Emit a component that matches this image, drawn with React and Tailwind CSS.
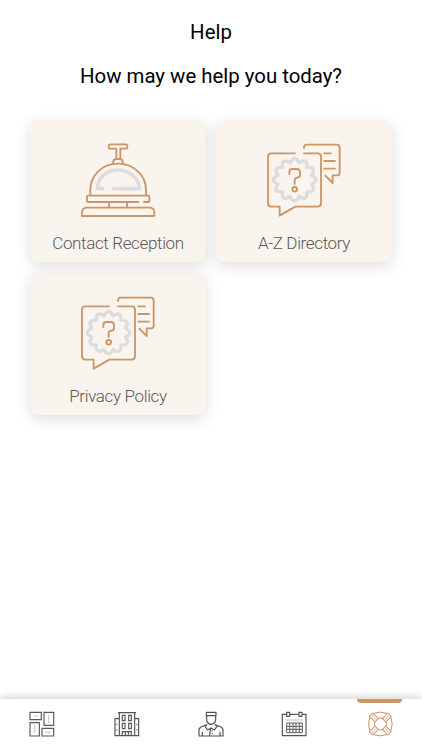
import React from "react";

const BellIcon = () => (
  <svg className="w-[100px] h-[90px]" viewBox="-5 1 300 270" fill="none" stroke="#cd9566" strokeWidth="5.5" strokeLinecap="round" strokeLinejoin="round">
    <path stroke="#dcdcdd" strokeWidth="11" d="M98 162H84v-6c2-28 26-50 60-50s60 22 65 50v6h-78" />
    <path d="M121 29h48q4 0 4 4v5q0 4-4 4h-17v31h-12V42h-19q-4 0-4-4v-5q0-4 4-4z" />
    <path d="M130 86c0-8 5-13 12-13h6c7 0 12 5 12 13" />
    <path d="M62 181v-15c0-44 36-79 83-79s84 35 84 79v15" />
    <path d="M206 202H55q-3 0-3-3v-13q0-3 3-3h181q3 0 3 3v13q0 3-3 3h-13" />
    <path d="M118 203v15M172 203v15" />
    <path d="M49 219h193q12 2 12 14v11H37v-11q0-12 12-14z" />
  </svg>
);

const QuestionIcon = () => (
  <svg className="w-[100px] h-[90px]" viewBox="-2 1 300 270" fill="none" stroke="#cd9566" strokeWidth="5.5" strokeLinecap="round" strokeLinejoin="round">
    <path
      stroke="#dcdcdd"
      strokeWidth="10"
      d="M106.500 84.800Q120 58 133.500 84.800Q158.500 68.300 156.800 98.200Q186.700 96.500 170.200 121.500Q197 135 170.200 148.500Q186.700 173.500 156.800 171.800Q158.500 201.700 133.500 185.200Q120 212 106.500 185.200Q81.500 201.700 83.200 171.800Q53.300 173.500 69.800 148.500Q43 135 69.800 121.500Q53.300 96.500 83.200 98.200Q81.500 68.300 106.500 84.800z"
    />
    <path d="M121 56H50q-10 0-10 10v140q0 10 10 10h25v27l47-27h67q10 0 10-10V66q0-10-10-10h-41" />
    <path d="M148 40v-1q0-9 9-9h89q9 0 9 9v75q0 8-8 8h-13v23l-22-22" />
    <path d="M209 56h20M209 79h32M209 102h32" />
    <path d="M104 118v-6q0-9 9-9h13q10 0 10 10v8q0 8-8 8-8 0-8 8v11" />
    <circle cx="120" cy="164" r="7" />
  </svg>
);

const RoomsIcon = () => (
  <svg className="w-7 h-7" viewBox="25 60 84 84" fill="none" stroke="#5a5a5a" strokeWidth="3.5">
    <path d="M31 67h34v22H31zM73 67h29v39H73zM31 98h28v40H31zM67 115h35v23H67z" />
    <path stroke="#c9c9c9" d="M40 78h16M87 76v23M45 106v22M77 127h16" />
  </svg>
);

const HotelIcon = () => (
  <svg className="w-7 h-7" viewBox="38 60 84 84" fill="none" stroke="#555" strokeWidth="3.5">
    <path d="M53 68h54M57 68v69M103 68v69M42 137h75M57 86H44v51M103 86h12v51" />
    <path d="M66 76h8v16h-8zM85 76h8v16h-8zM66 100h8v16h-8zM85 100h8v16h-8z" />
    <path d="M66 137v-12h27v12M75 125v12M84 125v12" />
    <path strokeWidth="2" d="M44 103h8M44 120h8M107 103h8M107 120h8" />
  </svg>
);

const ConciergeIcon = () => (
  <svg className="w-7 h-7" viewBox="36 60 84 84" fill="none" stroke="#505050" strokeWidth="3.5" strokeLinejoin="round">
    <path d="M64 67h29v10H64zM65 77v12c0 8 7 14 13 14s14-6 14-14V77" />
    <path d="M65 104L46 112l-4 6v20h72v-20l-4-6-19-8" />
    <path d="M67 103l-7 6 8 11 10-6 10 6 8-11-7-6M78 114c-4 8-4 14-4 24M52 125v13M105 125v13" />
    <path strokeWidth="2.5" d="M80 123h4M80 131h4" />
  </svg>
);

const CalendarIcon = () => (
  <svg className="w-7 h-7" viewBox="34 60 84 84" fill="none" stroke="#555" strokeWidth="3.5">
    <path d="M51 73H38v64h71V73H97M61 73h26M51 67h9v12h-9zM88 67h9v12h-9z" />
    <path stroke="#c9c9c9" d="M48 90h52" />
    <path strokeWidth="2.8" d="M51 99h47v29H51zM51 109h47M51 118h47M60 99v29M70 99v29M79 99v29M89 99v29" />
  </svg>
);

const LifebuoyIcon = () => (
  <svg className="w-7 h-7" viewBox="47 60 84 84" fill="none" stroke="#cd9566" strokeWidth="3" strokeLinejoin="round">
    <path d="M70 70q20-7 40 0l12 12q7 20 0 40l-12 12q-20 7-40 0l-12-12q-7-20 0-40z" />
    <circle cx="90" cy="102" r="18" />
    {[45, 135, 225, 315].map((deg) => (
      <g key={deg} transform={`rotate(${deg} 90 102)`}>
        <path fill="#fff" d="M106 95h23v14h-23z" />
        <path stroke="#dedad7" strokeWidth="5" d="M109 102h18" />
      </g>
    ))}
  </svg>
);

const cards = [
  { title: "Contact Reception", icon: <BellIcon /> },
  { title: "A-Z Directory", icon: <QuestionIcon /> },
  { title: "Privacy Policy", icon: <QuestionIcon /> },
];

const tabs = [
  { name: "Rooms", icon: <RoomsIcon /> },
  { name: "Hotel", icon: <HotelIcon /> },
  { name: "Concierge", icon: <ConciergeIcon /> },
  { name: "Calendar", icon: <CalendarIcon /> },
  { name: "Help", icon: <LifebuoyIcon />, active: true },
];

const App = () => {
  return (
    <div className="flex flex-col h-screen overflow-hidden bg-white font-['Roboto',sans-serif] text-black">
      <header className="pt-[18px] text-center text-[20.4px] leading-7">
        <h1>Help</h1>
        <h2 className="mt-4">How may we help you today?</h2>
      </header>

      <main className="grid grid-cols-2 content-start gap-x-2.5 gap-y-[11px] flex-1 px-[30px] pt-[30px]">
        {cards.map((card) => (
          <button
            key={card.title}
            className="flex flex-col items-center h-[142px] pt-[15px] rounded-lg bg-[#f9f4ee] shadow-[0_4px_16px_rgba(0,0,20,0.13)]"
          >
            {card.icon}
            <span className="mt-1.5 text-[17px] leading-6 font-light tracking-[-0.36px] text-[#5c5855]">{card.title}</span>
          </button>
        ))}
      </main>

      <nav className="grid grid-cols-5 h-[51px] bg-white shadow-[0_-2px_8px_rgba(0,0,0,0.18)]">
        {tabs.map((tab) => (
          <button key={tab.name} aria-label={tab.name} className="flex flex-col items-center">
            <span className={tab.active ? "w-[45px] h-1 rounded-b bg-[#cd9566]" : "w-[45px] h-1"} />
            <span className="mt-[7px]">{tab.icon}</span>
          </button>
        ))}
      </nav>
    </div>
  );
};

export default App;
